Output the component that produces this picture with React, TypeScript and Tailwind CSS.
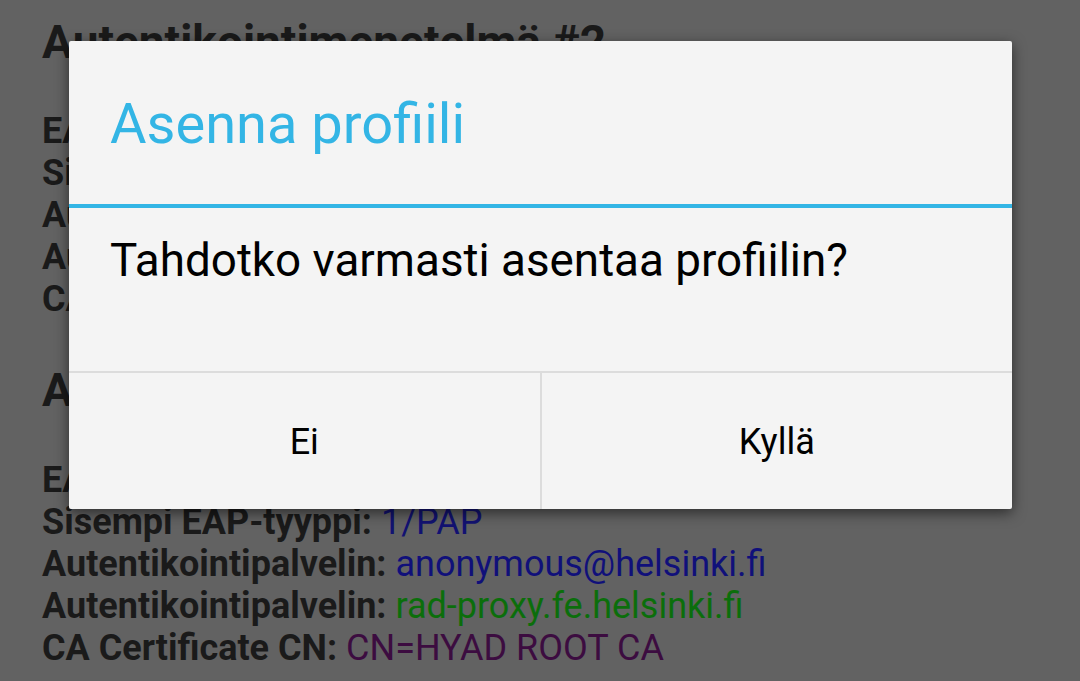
const sections = [
  {
    title: "Autentikointimenetelmä #2",
    rows: [
      { label: "EAP-tyyppi:", value: "21/TTLS", color: "text-[#121272]" },
      { label: "Sisempi EAP-tyyppi:", value: "1/PAP", color: "text-[#121272]" },
      { label: "Autentikointipalvelin:", value: "anonymous@helsinki.fi", color: "text-[#10107a]" },
      { label: "Autentikointipalvelin:", value: "rad-proxy.fe.helsinki.fi", color: "text-[#0b6e0b]" },
      { label: "CA Certificate CN:", value: "CN=HYAD ROOT CA", color: "text-[#3c0c40]" },
    ],
  },
  {
    title: "Autentikointimenetelmä #3",
    rows: [
      { label: "EAP-tyyppi:", value: "21/TTLS", color: "text-[#121272]" },
      { label: "Sisempi EAP-tyyppi:", value: "1/PAP", color: "text-[#121272]" },
      { label: "Autentikointipalvelin:", value: "anonymous@helsinki.fi", color: "text-[#10107a]" },
      { label: "Autentikointipalvelin:", value: "rad-proxy.fe.helsinki.fi", color: "text-[#0b6e0b]" },
      { label: "CA Certificate CN:", value: "CN=HYAD ROOT CA", color: "text-[#3c0c40]" },
    ],
  },
];

function ProfileDetails() {
  return (
    <div className="pl-[42px] pt-[14px]">
      {sections.map((section, i) => (
        <div key={i} className={i === 0 ? "" : "mt-[42px]"}>
          <h2 className="text-[46px] leading-[56px] font-bold text-[#1a1a1a] whitespace-nowrap">
            {section.title}
          </h2>
          <div className={i === 0 ? "mt-[40px]" : "mt-[41px]"}>
            {section.rows.map((row, j) => (
              <div key={j} className="text-[36px] leading-[42px] whitespace-nowrap">
                <span className="font-bold text-[#1a1a1a]">{row.label}</span>{" "}
                <span className={row.color}>{row.value}</span>
              </div>
            ))}
          </div>
        </div>
      ))}
    </div>
  );
}

function ConfirmDialog() {
  return (
    <div className="absolute left-[69px] top-[41px] w-[943px] bg-[#f4f4f4] rounded-[2px] shadow-[0_4px_14px_rgba(0,0,0,0.55)]">
      <div className="h-[163px] pl-[41px] pt-[50px]">
        <h1 className="text-[56px] leading-[66px] text-[#33b5e5] whitespace-nowrap">Asenna profiili</h1>
      </div>
      <div className="h-[4px] bg-[#33b5e5]" />
      <div className="h-[163px] pl-[41px] pt-[26px]">
        <p className="text-[45.8px] leading-[54px] text-black whitespace-nowrap">
          Tahdotko varmasti asentaa profiilin?
        </p>
      </div>
      <div className="h-[2px] bg-[#dcdcdc]" />
      <div className="flex h-[136px]">
        <button className="flex-1 flex items-center justify-center text-[36px] text-black pt-[2px]">Ei</button>
        <div className="w-[2px] bg-[#dcdcdc]" />
        <button className="flex-1 flex items-center justify-center text-[36px] text-black pt-[2px]">Kyllä</button>
      </div>
    </div>
  );
}

export default function App() {
  return (
    <div className="relative w-[1080px] h-[681px] overflow-hidden bg-[#626262] font-['Roboto',sans-serif]">
      <ProfileDetails />
      <ConfirmDialog />
    </div>
  );
}
